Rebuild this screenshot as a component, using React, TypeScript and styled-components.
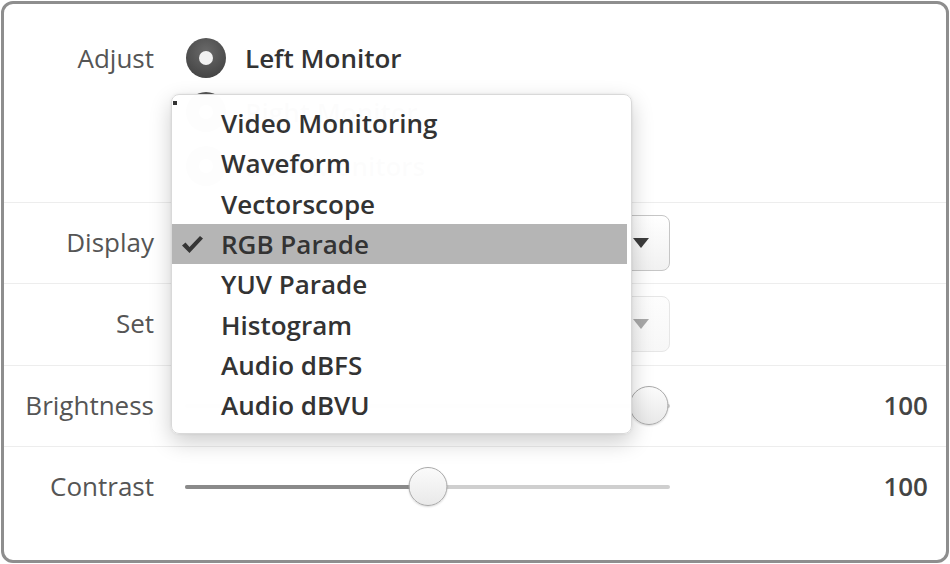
import React from "react";
import styled, { createGlobalStyle } from "styled-components";

const Global = createGlobalStyle`
  html, body { margin: 0; padding: 0; background: #fff; }
  body { font-family: "Open Sans", "Liberation Sans", sans-serif; }
`;

const Page = styled.div`
  width: 950px;
  height: 564px;
  box-sizing: border-box;
  padding: 1px;
`;

const Frame = styled.div`
  position: relative;
  box-sizing: border-box;
  height: 562px;
  border: 3px solid #8e8e8e;
  border-radius: 12px;
  background: #fff;
  overflow: hidden;
`;

const AdjustSection = styled.div`
  display: grid;
  grid-template-columns: 150px 485px 1fr;
  column-gap: 31px;
  align-items: start;
  height: 198px;
  padding-top: 27px;
  box-sizing: border-box;
`;

const Label = styled.div`
  text-align: right;
  font-size: 26px;
  color: #555;
  line-height: 54px;
  padding-bottom: 2px;
`;

const RadioList = styled.div`
  display: flex;
  flex-direction: column;
`;

const RadioRow = styled.div`
  display: flex;
  align-items: center;
  height: 54px;
  gap: 19px;
  padding-left: 1px;
`;

const RadioDot = styled.div`
  width: 40px;
  height: 40px;
  border-radius: 50%;
  box-sizing: border-box;
  background: radial-gradient(circle at 50% 35%, #6a6a6a 0%, #474747 75%, #3a3a3a 100%);
  display: flex;
  align-items: center;
  justify-content: center;
  &::after {
    content: "";
    width: 14px;
    height: 14px;
    border-radius: 50%;
    background: #f2f2f2;
  }
`;

const RadioText = styled.span`
  font-size: 26px;
  font-weight: 600;
  color: #333;
`;

const Row = styled.div`
  display: grid;
  grid-template-columns: 150px 485px 1fr;
  column-gap: 31px;
  align-items: center;
  height: 81.3px;
  border-top: 1px solid #ededed;
  box-sizing: border-box;
`;

const Select = styled.div<{ $disabled?: boolean }>`
  height: 56px;
  box-sizing: border-box;
  border: 1px solid ${(p) => (p.$disabled ? "#e6e6e6" : "#c6c6c6")};
  border-radius: 8px;
  background: ${(p) =>
    p.$disabled ? "linear-gradient(#fdfdfd, #f7f7f7)" : "linear-gradient(#ffffff, #f1f1f1)"};
  display: flex;
  align-items: center;
  justify-content: flex-end;
  padding-right: 20px;
`;

const Arrow = styled.div<{ $disabled?: boolean }>`
  width: 0;
  height: 0;
  border-left: 8px solid transparent;
  border-right: 8px solid transparent;
  border-top: 10px solid ${(p) => (p.$disabled ? "#a9a9a9" : "#3c3c3c")};
`;

const Slider = styled.div`
  position: relative;
  height: 40px;
  display: flex;
  align-items: center;
`;

const Track = styled.div`
  width: 100%;
  height: 4px;
  border-radius: 2px;
  background: #cfcfcf;
  overflow: hidden;
`;

const Fill = styled.div`
  height: 100%;
  background: #8a8a8a;
`;

const Thumb = styled.div`
  position: absolute;
  top: 0;
  width: 39px;
  height: 39px;
  border-radius: 50%;
  box-sizing: border-box;
  border: 1px solid #a9a9a9;
  background: linear-gradient(#fbfbfb, #e9e9e9);
  box-shadow: 0 1px 2px rgba(0, 0, 0, 0.15);
  transform: translateX(-50%);
`;

const Value = styled.div`
  text-align: right;
  padding-right: 18px;
  padding-bottom: 2px;
  font-size: 26px;
  font-weight: 600;
  color: #444;
`;

const Menu = styled.div`
  position: absolute;
  left: 167px;
  top: 90px;
  width: 461px;
  height: 340px;
  box-sizing: border-box;
  padding-top: 8px;
  background: rgba(255, 255, 255, 0.99);
  border: 1px solid #d9d9d9;
  border-radius: 8px;
  box-shadow: 0 8px 22px rgba(0, 0, 0, 0.2), 0 0 3px rgba(0, 0, 0, 0.08);
`;

const Speck = styled.div`
  position: absolute;
  left: 1px;
  top: 6px;
  width: 4px;
  height: 4px;
  background: #333;
`;

const Item = styled.div<{ $selected?: boolean }>`
  position: relative;
  height: 40.3px;
  margin-right: 4px;
  display: flex;
  align-items: center;
  padding-left: 49px;
  font-size: 26px;
  font-weight: 600;
  color: #333;
  background: ${(p) => (p.$selected ? "#b5b5b5" : "transparent")};
`;

const Check = styled.svg`
  position: absolute;
  left: 9px;
  top: 11px;
`;

const menuItems = [
  "Video Monitoring",
  "Waveform",
  "Vectorscope",
  "RGB Parade",
  "YUV Parade",
  "Histogram",
  "Audio dBFS",
  "Audio dBVU",
];

export default function App() {
  return (
    <Page>
      <Global />
      <Frame>
        <AdjustSection>
          <Label>Adjust</Label>
          <RadioList>
            <RadioRow>
              <RadioDot />
              <RadioText>Left Monitor</RadioText>
            </RadioRow>
            <RadioRow>
              <RadioDot />
              <RadioText>Right Monitor</RadioText>
            </RadioRow>
            <RadioRow>
              <RadioDot />
              <RadioText>Both Monitors</RadioText>
            </RadioRow>
          </RadioList>
        </AdjustSection>
        <Row>
          <Label>Display</Label>
          <Select>
            <Arrow />
          </Select>
        </Row>
        <Row>
          <Label>Set</Label>
          <Select $disabled>
            <Arrow $disabled />
          </Select>
        </Row>
        <Row>
          <Label>Brightness</Label>
          <Slider>
            <Track>
              <Fill style={{ width: "96%" }} />
            </Track>
            <Thumb style={{ left: "95.7%" }} />
          </Slider>
          <Value>100</Value>
        </Row>
        <Row>
          <Label>Contrast</Label>
          <Slider>
            <Track>
              <Fill style={{ width: "50%" }} />
            </Track>
            <Thumb style={{ left: "50.2%" }} />
          </Slider>
          <Value>100</Value>
        </Row>
        <Menu>
          <Speck />
          {menuItems.map((m) => (
            <Item key={m} $selected={m === "RGB Parade"}>
              {m === "RGB Parade" && (
                <Check width="23" height="19" viewBox="0 0 23 19">
                  <path d="M1 10.5 L4.5 7.5 L8.5 12 L19 1 L22 3.5 L8.5 18 Z" fill="#353535" />
                </Check>
              )}
              {m}
            </Item>
          ))}
        </Menu>
      </Frame>
    </Page>
  );
}
